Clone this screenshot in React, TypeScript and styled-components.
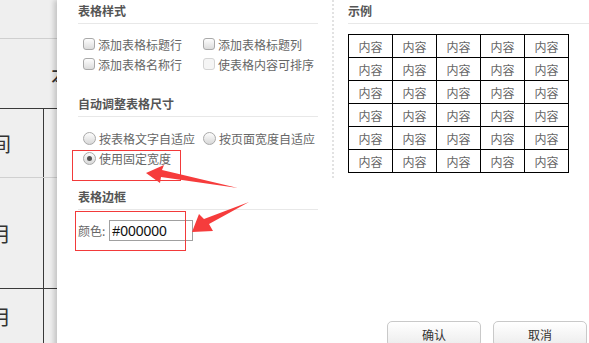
import { FunctionComponent } from 'react';
import styled, { createGlobalStyle } from 'styled-components';

const GlobalStyle = createGlobalStyle`
  html, body {
    margin: 0;
    padding: 0;
    background: #ffffff;
  }
  body {
    font-family: "Noto Sans CJK SC", "Noto Sans", sans-serif;
  }
`;

const Screen = styled.div`
  position: relative;
  width: 589px;
  height: 343px;
  overflow: hidden;
  background: #efefef;
`;

/* the page behind the dialog */
const Page = styled.div`
  display: grid;
  grid-template-rows: 39px 69px 69px 111px 1fr;
  height: 100%;
  color: #333;
`;

const TopBar = styled.div`
  border-bottom: 1px solid #cfcfcf;
`;

const Caption = styled.div`
  position: relative;
  overflow: hidden;
  font-size: 22px;
  line-height: 26px;
  padding: 22px 0 0 51px;
  white-space: nowrap;
`;

const Row = styled.div<{ $border: string }>`
  display: grid;
  grid-template-columns: 44px 1fr;
  border-top: 1px solid ${({ $border }) => $border};
`;

const HeadCell = styled.div`
  border-right: 1px solid #3a3a3a;
  overflow: hidden;
  white-space: nowrap;
  display: flex;
  align-items: center;
  justify-content: flex-end;
  padding-right: 32px;
  font-size: 20px;
`;

const Cell = styled.div``;

/* dialog */
const Dialog = styled.div`
  position: absolute;
  top: 0;
  left: 57px;
  width: 532px;
  height: 348px;
  background: #ffffff;
  box-shadow: -3px 0 5px rgba(0, 0, 0, 0.18);
  display: flex;
  flex-direction: column;
`;

const Body = styled.div`
  display: flex;
  align-items: flex-start;
  padding-left: 21px;
`;

const LeftColumn = styled.div`
  width: 240px;
`;

const Separator = styled.div`
  width: 0;
  height: 178px;
  margin: 0 14px 0 14px;
  border-left: 2px dotted #e2e2e2;
`;

const RightColumn = styled.div`
  flex: 1;
`;

const Title = styled.div<{ $top: number }>`
  margin-top: ${({ $top }) => $top}px;
  padding-bottom: 4px;
  border-bottom: 1px solid #e8e8e8;
  font-size: 12px;
  line-height: 16px;
  font-weight: bold;
  color: #555;
`;

const OptionGrid = styled.div<{ $top: number }>`
  display: grid;
  grid-template-columns: 120px 120px;
  grid-auto-rows: 20px;
  margin-top: ${({ $top }) => $top}px;
  padding-left: 5px;
`;

const Option = styled.label`
  display: flex;
  align-items: center;
  gap: 3px;
  font-size: 12px;
  color: #666;
  white-space: nowrap;
`;

const Box = styled.span<{ $disabled?: boolean }>`
  width: 10px;
  height: 10px;
  border: 1px solid ${({ $disabled }) => ($disabled ? '#d4d4d4' : '#a9a9a9')};
  border-radius: 3px;
  background: ${({ $disabled }) =>
    $disabled ? '#f5f5f5' : 'linear-gradient(#fdfdfd, #dcdcdc)'};
`;

const Radio = styled.span<{ $checked?: boolean }>`
  position: relative;
  width: 11px;
  height: 11px;
  border: 1px solid #a9a9a9;
  border-radius: 50%;
  background: linear-gradient(#fdfdfd, #d8d8d8);

  &::after {
    content: '';
    display: ${({ $checked }) => ($checked ? 'block' : 'none')};
    position: absolute;
    left: 3px;
    top: 3px;
    width: 5px;
    height: 5px;
    border-radius: 50%;
    background: #555;
  }
`;

const ColorRow = styled.div`
  display: flex;
  align-items: center;
  margin-top: 10px;
  font-size: 12px;
  color: #666;
`;

const ColorInput = styled.div`
  width: 80px;
  height: 19px;
  margin-left: 4px;
  border: 1px solid #a0a0a0;
  padding-left: 2px;
  font-family: "Liberation Sans", Arial, sans-serif;
  font-size: 14px;
  line-height: 20px;
  color: #111;
`;

const Sample = styled.table`
  margin-top: 10px;
  border-collapse: collapse;
`;

const SampleCell = styled.td`
  width: 43px;
  height: 22px;
  padding: 0;
  border: 1px solid #000;
  text-align: center;
  font-size: 12px;
  color: #666;
`;

const Footer = styled.div`
  margin-top: auto;
  display: flex;
  justify-content: flex-end;
  gap: 12px;
  padding: 0 2px 1px 0;
`;

const Button = styled.button`
  width: 94px;
  height: 26px;
  border: 1px solid #c9c9c9;
  border-radius: 5px;
  background: linear-gradient(#ffffff, #ececec);
  font-family: inherit;
  font-size: 12px;
  color: #333;
  padding: 0;
`;

const Annotations = styled.svg`
  position: absolute;
  top: 0;
  left: 0;
  pointer-events: none;
`;

const styleOptions = [
  { label: '添加表格标题行' },
  { label: '添加表格标题列' },
  { label: '添加表格名称行' },
  { label: '使表格内容可排序', disabled: true },
];

const sizeOptions = [
  { label: '按表格文字自适应' },
  { label: '按页面宽度自适应' },
  { label: '使用固定宽度', checked: true },
];

const App: FunctionComponent = () => {
  return (
    <Screen>
      <GlobalStyle />
      <Page>
        <TopBar />
        <Caption>本</Caption>
        <Row $border="#3a3a3a">
          <HeadCell>时间</HeadCell>
          <Cell />
        </Row>
        <Row $border="#d0d0d0">
          <HeadCell>月</HeadCell>
          <Cell />
        </Row>
        <Row $border="#3a3a3a">
          <HeadCell>月</HeadCell>
          <Cell />
        </Row>
      </Page>

      <Dialog>
        <Body>
          <LeftColumn>
            <Title $top={3}>表格样式</Title>
            <OptionGrid $top={10}>
              {styleOptions.map((o) => (
                <Option key={o.label}>
                  <Box $disabled={o.disabled} />
                  {o.label}
                </Option>
              ))}
            </OptionGrid>

            <Title $top={22}>自动调整表格尺寸</Title>
            <OptionGrid $top={11}>
              {sizeOptions.map((o) => (
                <Option key={o.label}>
                  <Radio $checked={o.checked} />
                  {o.label}
                </Option>
              ))}
            </OptionGrid>

            <Title $top={21}>表格边框</Title>
            <ColorRow>
              颜色:
              <ColorInput>#000000</ColorInput>
            </ColorRow>
          </LeftColumn>

          <Separator />

          <RightColumn>
            <Title $top={3}>示例</Title>
            <Sample>
              <tbody>
                {Array.from({ length: 6 }).map((_, r) => (
                  <tr key={r}>
                    {Array.from({ length: 5 }).map((_, c) => (
                      <SampleCell key={c}>内容</SampleCell>
                    ))}
                  </tr>
                ))}
              </tbody>
            </Sample>
          </RightColumn>
        </Body>

        <Footer>
          <Button>确认</Button>
          <Button>取消</Button>
        </Footer>
      </Dialog>

      <Annotations width="589" height="343" viewBox="0 0 589 343">
        <rect x="72.5" y="150.5" width="108" height="30" fill="none" stroke="#f23a3a" />
        <rect x="75.5" y="211.5" width="110" height="39" fill="none" stroke="#f23a3a" />
        <polygon
          points="146,173 164,165 162,170 238,188 161,177 160,183"
          fill="#f63c3c"
        />
        <polygon
          points="192,232 199,214 204,219 249,202 209,224 213,231"
          fill="#f63c3c"
        />
      </Annotations>
    </Screen>
  );
};

export default App;
